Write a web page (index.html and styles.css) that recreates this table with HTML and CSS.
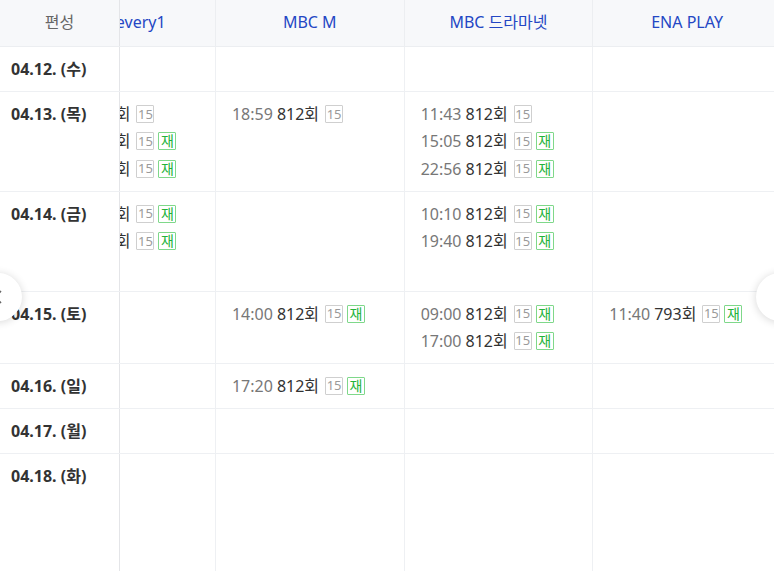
FILE: index.html
```html
<!DOCTYPE html>
<html lang="ko">
<head>
<meta charset="utf-8">
<link rel="stylesheet" href="styles.css">
</head>
<body>
<div class="board">
  <div class="row head">
    <div class="date">편성</div>
    <div class="cell first">MBC every1</div>
    <div class="cell">MBC M</div>
    <div class="cell">MBC 드라마넷</div>
    <div class="cell">ENA PLAY</div>
    <div class="cell">MBC ON</div>
  </div>

  <div class="row">
    <div class="date">04.12. (수)</div>
    <div class="cell first"></div>
    <div class="cell"></div>
    <div class="cell"></div>
    <div class="cell"></div>
    <div class="cell"></div>
  </div>

  <div class="row">
    <div class="date">04.13. (목)</div>
    <div class="cell first">
      <div class="item"><span class="time">08:20</span> 812회<span class="bd age">15</span></div>
      <div class="item"><span class="time">13:10</span> 812회<span class="bd age">15</span><span class="bd re">재</span></div>
      <div class="item"><span class="time">20:40</span> 812회<span class="bd age">15</span><span class="bd re">재</span></div>
    </div>
    <div class="cell">
      <div class="item"><span class="time">18:59</span> 812회<span class="bd age">15</span></div>
    </div>
    <div class="cell">
      <div class="item"><span class="time">11:43</span> 812회<span class="bd age">15</span></div>
      <div class="item"><span class="time">15:05</span> 812회<span class="bd age">15</span><span class="bd re">재</span></div>
      <div class="item"><span class="time">22:56</span> 812회<span class="bd age">15</span><span class="bd re">재</span></div>
    </div>
    <div class="cell"></div>
    <div class="cell"></div>
  </div>

  <div class="row">
    <div class="date">04.14. (금)</div>
    <div class="cell first">
      <div class="item"><span class="time">09:30</span> 812회<span class="bd age">15</span><span class="bd re">재</span></div>
      <div class="item"><span class="time">16:10</span> 812회<span class="bd age">15</span><span class="bd re">재</span></div>
    </div>
    <div class="cell"></div>
    <div class="cell">
      <div class="item"><span class="time">10:10</span> 812회<span class="bd age">15</span><span class="bd re">재</span></div>
      <div class="item"><span class="time">19:40</span> 812회<span class="bd age">15</span><span class="bd re">재</span></div>
    </div>
    <div class="cell"></div>
    <div class="cell">
      <div class="item"><span class="time">07:00</span> 812회<span class="bd age">15</span><span class="bd re">재</span></div>
      <div class="item"><span class="time">12:00</span> 812회<span class="bd age">15</span><span class="bd re">재</span></div>
      <div class="item"><span class="time">21:00</span> 812회<span class="bd age">15</span><span class="bd re">재</span></div>
    </div>
  </div>

  <div class="row">
    <div class="date">04.15. (토)</div>
    <div class="cell first"></div>
    <div class="cell">
      <div class="item"><span class="time">14:00</span> 812회<span class="bd age">15</span><span class="bd re">재</span></div>
    </div>
    <div class="cell">
      <div class="item"><span class="time">09:00</span> 812회<span class="bd age">15</span><span class="bd re">재</span></div>
      <div class="item"><span class="time">17:00</span> 812회<span class="bd age">15</span><span class="bd re">재</span></div>
    </div>
    <div class="cell">
      <div class="item"><span class="time">11:40</span> 793회<span class="bd age">15</span><span class="bd re">재</span></div>
    </div>
    <div class="cell"></div>
  </div>

  <div class="row">
    <div class="date">04.16. (일)</div>
    <div class="cell first"></div>
    <div class="cell">
      <div class="item"><span class="time">17:20</span> 812회<span class="bd age">15</span><span class="bd re">재</span></div>
    </div>
    <div class="cell"></div>
    <div class="cell"></div>
    <div class="cell"></div>
  </div>

  <div class="row">
    <div class="date">04.17. (월)</div>
    <div class="cell first"></div>
    <div class="cell"></div>
    <div class="cell"></div>
    <div class="cell"></div>
    <div class="cell"></div>
  </div>

  <div class="row last">
    <div class="date">04.18. (화)</div>
    <div class="cell first"></div>
    <div class="cell"></div>
    <div class="cell"></div>
    <div class="cell"></div>
    <div class="cell"></div>
  </div>

  <button class="nav prev" aria-label="이전">
    <svg width="12" height="14" viewBox="0 0 12 14"><path d="M9 1 L3 7 L9 13" fill="none" stroke="#666" stroke-width="1.6"/></svg>
  </button>
  <button class="nav next" aria-label="다음">
    <svg width="12" height="14" viewBox="0 0 12 14"><path d="M2 1 L8 7 L2 13" fill="none" stroke="#888" stroke-width="1.4"/></svg>
  </button>
</div>
</body>
</html>
```

FILE: styles.css
```css
* { box-sizing: border-box; }
html, body { margin: 0; padding: 0; background: #fff; }
body {
  font-family: "Noto Sans", "Noto Sans CJK KR", sans-serif;
  font-size: 16px;
  color: #333;
}
.board {
  position: relative;
  width: 774px;
  height: 571px;
  overflow: hidden;
  display: flex;
  flex-direction: column;
}
.row {
  display: flex;
  flex: none;
  border-bottom: 1px solid #eef0f3;
}
.row.last { flex: 1; border-bottom: none; }
.date {
  position: relative;
  z-index: 1;
  flex: none;
  width: 120px;
  padding: 11px 0 11px 11px;
  line-height: 22px;
  font-weight: 700;
  color: #333;
  background: #fff;
  border-right: 1px solid #e4e5e8;
}
.cell {
  flex: none;
  width: 188.67px;
  padding: 11px 0 11px 16px;
  border-right: 1px solid #eef0f3;
  line-height: 22px;
  white-space: nowrap;
  display: flex;
  flex-direction: column;
  gap: 5.4px;
}
.cell.first { margin-left: -92.7px; }
.head { background: #f7f8fa; border-bottom-color: #eceef1; }
.head .date, .head .cell {
  background: #f7f8fa;
  font-weight: 400;
  text-align: center;
  align-items: center;
  height: 46px;
  padding: 11px 0 13px;
  line-height: 22px;
}
.head .date { color: #666; padding-left: 0; }
.head .cell { color: #2447c4; border-right-color: #eceef1; }
.item { display: flex; align-items: center; height: 22px; }
.time { color: #777; margin-right: 4px; }
.bd {
  display: inline-flex;
  align-items: center;
  justify-content: center;
  width: 18px;
  height: 18px;
  font-size: 13px;
  line-height: 1;
  border: 1px solid #cfcfcf;
  color: #9a9a9a;
  border-radius: 1px;
}
.bd.age { margin-left: 6px; }
.bd.re { margin-left: 4px; border-color: #7fd88a; color: #23b33a; font-size: 14px; }
.nav {
  position: absolute;
  top: 273px;
  width: 48px;
  height: 48px;
  border-radius: 50%;
  border: none;
  background: #fff;
  box-shadow: 0 1px 8px rgba(0,0,0,0.16);
  z-index: 2;
  padding: 0;
  display: flex;
  align-items: center;
  cursor: pointer;
}
.nav.prev { left: -26px; justify-content: flex-end; padding-right: 18px; }
.nav.next { left: 756px; justify-content: flex-start; padding-left: 17px; }
```
